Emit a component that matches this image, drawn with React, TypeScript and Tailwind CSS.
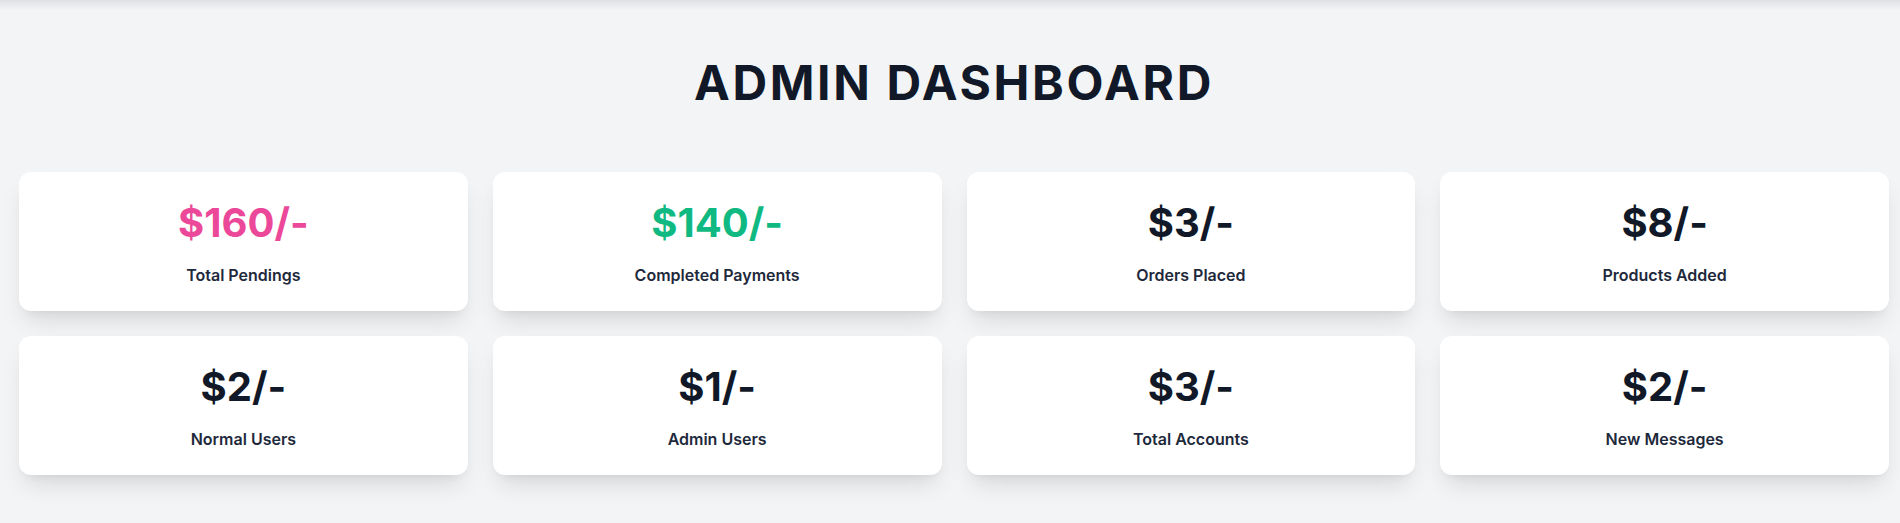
import React from 'react';

interface StatCard {
  value: string;
  label: string;
  color: string;
}

const stats: StatCard[] = [
  { value: '$160/-', label: 'Total Pendings', color: 'text-[#ec4899]' },
  { value: '$140/-', label: 'Completed Payments', color: 'text-[#10b981]' },
  { value: '$3/-', label: 'Orders Placed', color: 'text-[#111827]' },
  { value: '$8/-', label: 'Products Added', color: 'text-[#111827]' },
  { value: '$2/-', label: 'Normal Users', color: 'text-[#111827]' },
  { value: '$1/-', label: 'Admin Users', color: 'text-[#111827]' },
  { value: '$3/-', label: 'Total Accounts', color: 'text-[#111827]' },
  { value: '$2/-', label: 'New Messages', color: 'text-[#111827]' },
];

const App: React.FC = () => {
  return (
    <div className="min-h-[523px] bg-[#f3f4f6] font-['Inter',sans-serif] overflow-hidden">
      <div className="h-[10px] bg-gradient-to-b from-[#dfe0e3] to-[#f3f4f6]" />

      <section className="pl-[19px] pr-[11px]">
        <h1 className="mt-[49px] text-center text-[48px] leading-none font-bold tracking-[0.055em] text-[#111827]">
          ADMIN DASHBOARD
        </h1>

        <div className="mt-[65px] grid grid-cols-4 gap-[25px]">
          {stats.map((item) => (
            <div
              key={item.label}
              className="h-[139px] rounded-xl bg-white pt-[31px] text-center shadow-[0_14px_24px_-6px_rgba(0,0,0,0.12),0_6px_10px_-6px_rgba(0,0,0,0.08)]"
            >
              <h3 className={`text-[40px] leading-none font-bold ${item.color}`}>{item.value}</h3>
              <p className="mt-[20px] text-[16px] leading-6 font-semibold text-[#1e293b]">{item.label}</p>
            </div>
          ))}
        </div>
      </section>
    </div>
  );
};

export default App;
